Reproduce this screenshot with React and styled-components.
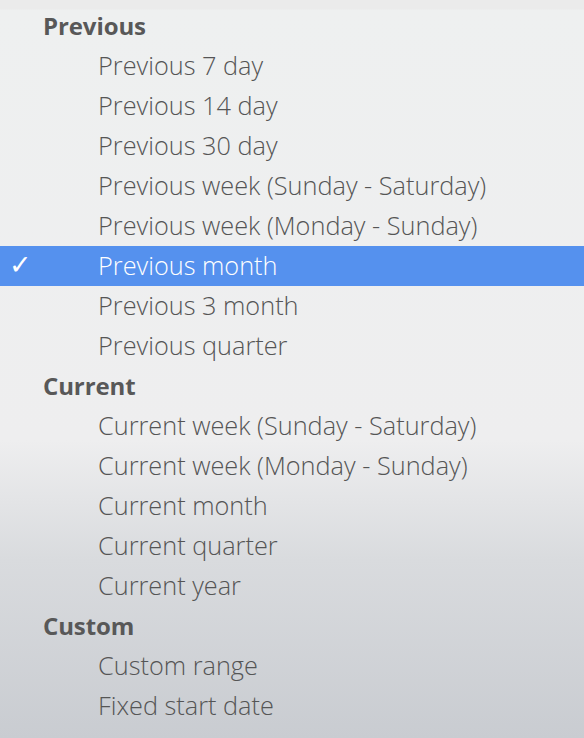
import React from "react";
import styled, { createGlobalStyle } from "styled-components";

const Global = createGlobalStyle`
  html, body { margin: 0; padding: 0; }
  body { width: 584px; height: 738px; overflow: hidden; }
`;

const Menu = styled.div`
  width: 584px;
  height: 738px;
  box-sizing: border-box;
  padding-top: 6px;
  background: linear-gradient(
    to bottom,
    #ebebeb 0px,
    #ebebeb 9px,
    #eef0f0 10px,
    #eeeeef 440px,
    #d9dbde 560px,
    #c9ccd1 738px
  );
  font-family: "Open Sans", "Liberation Sans", sans-serif;
  display: flex;
  flex-direction: column;
`;

const Header = styled.div`
  height: 40px;
  box-sizing: border-box;
  padding-bottom: 2px;
  display: flex;
  align-items: center;
  padding-left: 43px;
  font-size: 24px;
  font-weight: 700;
  color: #585858;
  letter-spacing: -0.1px;
`;

const Item = styled.div`
  height: 40px;
  box-sizing: border-box;
  padding-bottom: 2px;
  display: flex;
  align-items: center;
  position: relative;
  padding-left: 98px;
  font-size: 25.3px;
  font-weight: 300;
  letter-spacing: 0;
  color: ${(p) => (p.$selected ? "#ffffff" : "#555555")};
  background: ${(p) => (p.$selected ? "#5591ee" : "transparent")};
`;

const Check = styled.span`
  position: absolute;
  left: 9px;
  top: 50%;
  transform: translateY(-54%);
  font-family: "DejaVu Sans", sans-serif;
  font-size: 27px;
  font-weight: 400;
  color: #ffffff;
`;

const groups = [
  {
    title: "Previous",
    items: [
      "Previous 7 day",
      "Previous 14 day",
      "Previous 30 day",
      "Previous week (Sunday - Saturday)",
      "Previous week (Monday - Sunday)",
      "Previous month",
      "Previous 3 month",
      "Previous quarter",
    ],
  },
  {
    title: "Current",
    items: [
      "Current week (Sunday - Saturday)",
      "Current week (Monday - Sunday)",
      "Current month",
      "Current quarter",
      "Current year",
    ],
  },
  {
    title: "Custom",
    items: ["Custom range", "Fixed start date"],
  },
];

const selected = "Previous month";

export default function App() {
  return (
    <>
      <Global />
      <Menu>
        {groups.map((g) => (
          <React.Fragment key={g.title}>
            <Header>{g.title}</Header>
            {g.items.map((it) => (
              <Item key={it} $selected={it === selected}>
                {it === selected && <Check>✓</Check>}
                {it}
              </Item>
            ))}
          </React.Fragment>
        ))}
      </Menu>
    </>
  );
}
